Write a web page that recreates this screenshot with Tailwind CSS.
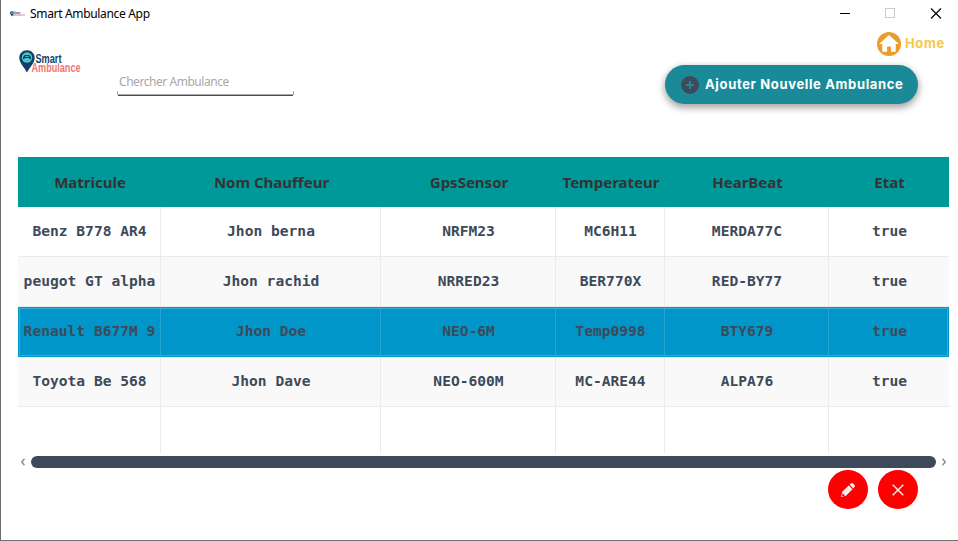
<!DOCTYPE html>
<html lang="fr">
<head>
<meta charset="utf-8">
<title>Smart Ambulance App</title>
<script src="https://cdn.jsdelivr.net/npm/@tailwindcss/browser@4"></script>
</head>
<body class="h-[541px] w-[958px] overflow-hidden bg-white">
<svg class="hidden">
  <symbol id="logo" viewBox="0 0 62 24">
    <path d="M8 0.2C3.600.2.300 3.500.300 7.700.300 13 5 16.500 8 22.500 11 16.500 15.700 13 15.700 7.700 15.700 3.500 12.400.2 8 .2z" fill="#0f3f69"/>
    <circle cx="8" cy="7.500" r="5.200" fill="#4cc3c5"/>
    <path d="M4 7.200L5.600 5h4.800L12 7.200V9h-1.200L10 8H6L5.200 9H4z" fill="#0f3f69"/>
    <path d="M6.300 6.500h3.400" stroke="#4cc3c5" stroke-width=".9"/>
    <text x="16.500" y="13" font-family="'Liberation Sans',sans-serif" font-weight="700" font-size="13" textLength="26" lengthAdjust="spacingAndGlyphs" fill="#0f3f69">Smart</text>
    <text x="12.500" y="22.200" font-family="'Liberation Sans',sans-serif" font-weight="700" font-size="13.500" textLength="49" lengthAdjust="spacingAndGlyphs" fill="#f27575">Ambulance</text>
  </symbol>
</svg>
<div class="flex h-full flex-col border-b border-l border-[#6e6e6e]">
  <!-- Title bar -->
  <header class="flex h-7 shrink-0 items-center pl-[9px] pr-[16px]">
    <svg class="h-[6px] w-[15px]" viewBox="0 0 62 24"><use href="#logo"/></svg>
    <h1 class="ml-[5px] font-['Noto_Sans','Open_Sans',sans-serif] text-[12px] tracking-[-0.33px] text-black">Smart Ambulance App</h1>
    <svg class="ml-auto h-[12px] w-[102px]" viewBox="0 0 102 12" fill="none">
      <path d="M0 5.500h10" stroke="#000"/>
      <rect x="45.500" y=".5" width="9" height="9" stroke="#ccc"/>
      <path d="M91 .5l10 10m0-10l-10 10" stroke="#000" stroke-width="1.100"/>
    </svg>
  </header>

  <!-- Toolbar -->
  <section class="flex h-[129px] shrink-0 pl-[18px]">
    <svg class="mt-[22px] h-[24px] w-[62px]" viewBox="0 0 62 24"><use href="#logo"/></svg>
    <div class="ml-[36px] mt-[42px] flex h-[26px] w-[177px] flex-col">
      <div class="flex h-[25px] items-center rounded-b-[4px] border-x border-b border-[#aaa] pb-px pl-px font-['Noto_Sans','Open_Sans',sans-serif] text-[12px] tracking-[-0.45px] text-[#a8a8a8] [border-image:linear-gradient(to_top,#aaa_4px,transparent_4px)_1]">Chercher Ambulance</div>
      <div class="mx-px h-px bg-[#4d4d4d]"></div>
    </div>
    <div class="ml-auto flex flex-col items-end">
      <a class="mr-[13px] mt-[3px] flex h-[26px] items-center gap-[4px] font-['Inter',sans-serif] text-[13px] font-bold tracking-[0.65px] text-[#f9c846]">
        <svg class="h-[24px] w-[24px]" viewBox="0 0 25 25"><circle cx="12.500" cy="12.500" r="12.500" fill="#e99d2c"/><path d="M12.500 3.200L2.200 12.500h3.300V20.500h5v-5.300h4v5.300h5v-8h3.300z" fill="#fff"/></svg>
        <span class="inline-block w-[40px]">Home</span>
      </a>
      <button class="mr-[40px] mt-[8px] flex h-[39px] w-[253px] items-center rounded-full bg-[#1b8a98] pl-[16px] font-['Inter',sans-serif] text-[13px] font-bold tracking-[0.65px] whitespace-nowrap text-white shadow-[0_3px_7px_1px_rgba(0,0,0,0.35)]">
        <svg class="mr-[6px] h-[18px] w-[18px] shrink-0" viewBox="0 0 18 18"><circle cx="9" cy="9" r="9" fill="#3e4a59"/><path d="M9 5v8M5 9h8" stroke="#1b8a98" stroke-width="2"/></svg>
        <span>Ajouter Nouvelle Ambulance</span>
      </button>
    </div>
  </section>

  <!-- Ambulance table -->
  <table class="ml-[17px] w-[931px] table-fixed border-separate border-spacing-0 text-center font-['DejaVu_Sans_Mono',monospace] text-[14.6px] font-bold whitespace-nowrap text-[#3e4a59] [&_td]:border-[#ebebeb] [&_td]:p-0 [&_td]:pb-[2px] [&_td]:pl-px [&_td:not(:last-child)]:border-r">
    <colgroup><col class="w-[143px]"><col class="w-[220px]"><col class="w-[175px]"><col class="w-[109px]"><col class="w-[164px]"><col class="w-[120px]"></colgroup>
    <thead class="bg-[#009999] font-['Noto_Sans','Open_Sans',sans-serif] text-[15px] text-[#333]">
      <tr class="h-[50px] [&_th]:p-0 [&_th]:pl-px"><th>Matricule</th><th>Nom Chauffeur</th><th>GpsSensor</th><th>Temperateur</th><th>HearBeat</th><th>Etat</th></tr>
    </thead>
    <tbody>
      <tr class="h-[50px] [&_td]:border-b"><td>Benz B778 AR4</td><td>Jhon berna</td><td>NRFM23</td><td>MC6H11</td><td>MERDA77C</td><td>true</td></tr>
      <tr class="h-[50px] bg-[#f9f9f9] [&_td]:border-b"><td>peugot GT alpha</td><td>Jhon rachid</td><td>NRRED23</td><td>BER770X</td><td>RED-BY77</td><td>true</td></tr>
      <tr class="h-[50px] bg-[#0096c9] outline outline-offset-[-2px] outline-[#33abd4] [&_td]:border-[#26a5d1]!"><td>Renault B677M 9</td><td>Jhon Doe</td><td>NEO-6M</td><td>Temp0998</td><td>BTY679</td><td>true</td></tr>
      <tr class="h-[50px] bg-[#f9f9f9] [&_td]:border-b"><td>Toyota Be 568</td><td>Jhon Dave</td><td>NEO-600M</td><td>MC-ARE44</td><td>ALPA76</td><td>true</td></tr>
      <tr class="h-[47px]"><td></td><td></td><td></td><td></td><td></td><td></td></tr>
    </tbody>
  </table>

  <!-- Horizontal scrollbar -->
  <div class="ml-[17px] mt-[2px] flex h-[12px] w-[931px] shrink-0 items-center">
    <svg class="mr-[6px] ml-[3px] h-[8px] w-[4px] shrink-0" viewBox="0 0 4 8" fill="none" stroke="#8c8c8c" stroke-width="1.400"><path d="M3.500.8L.8 4l2.700 3.200"/></svg>
    <div class="h-[12px] w-[905px] shrink-0 rounded-full bg-[#3e4a59]"></div>
    <svg class="ml-[6px] h-[8px] w-[4px] shrink-0" viewBox="0 0 4 8" fill="none" stroke="#8c8c8c" stroke-width="1.400"><path d="M.5.8L3.200 4 .5 7.200"/></svg>
  </div>

  <!-- Row actions -->
  <div class="mt-[2px] mr-[40px] flex justify-end gap-[10px]">
    <button class="flex h-[39px] w-[40px] items-center justify-center rounded-[50%] bg-[#ff0000]">
      <svg class="h-[16px] w-[16px]" viewBox="0 0 16 16"><path d="M1 15l1.200-5.200 6.500-6.300 3.800 3.800L6 13.800zM9.600 2.700l1.500-1.400q1-.8 2 .1l1.500 1.500q.9 1 0 1.900l-1.300 1.600z" fill="#eee"/><path d="M2.600 11.200l2.400 2.400-2.200.6-.8-.8z" fill="#f00"/></svg>
    </button>
    <button class="flex h-[39px] w-[40px] items-center justify-center rounded-[50%] bg-[#ff0000]">
      <svg class="h-[12px] w-[12px]" viewBox="0 0 12 12" fill="none" stroke="#eee" stroke-width="1.500"><path d="M.7.7l10.600 10.600m0-10.600L.7 11.300"/></svg>
    </button>
  </div>
</div>
</body>
</html>
